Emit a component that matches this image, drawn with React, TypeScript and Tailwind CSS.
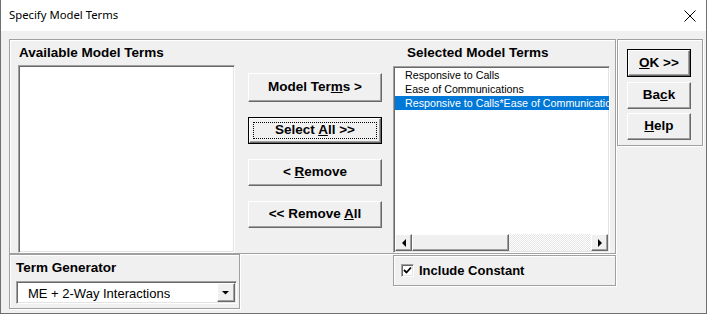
const frame =
  "border border-[#a0a0a0] shadow-[inset_1px_1px_0_#ffffff,1px_1px_0_#ffffff]";
const sunken =
  "border border-t-[#a0a0a0] border-l-[#a0a0a0] border-r-white border-b-white shadow-[inset_1px_1px_0_#696969,inset_-1px_-1px_0_#e3e3e3]";
const raised =
  "border border-t-white border-l-white border-r-[#696969] border-b-[#696969] shadow-[inset_-1px_-1px_0_#a0a0a0] bg-[#f0f0f0]";

function Btn({
  children,
  h,
  mt,
  isDefault,
  focused,
}: {
  children: React.ReactNode;
  h: string;
  mt: string;
  isDefault?: boolean;
  focused?: boolean;
}) {
  if (isDefault) {
    return (
      <div className={`${h} ${mt} border border-black`}>
        <div className={`${raised} flex h-full items-center justify-center`}>
          <span
            className={`flex items-center justify-center ${
              focused
                ? "h-[calc(100%-6px)] w-[calc(100%-6px)] border border-dotted border-black"
                : ""
            }`}
          >
            {children}
          </span>
        </div>
      </div>
    );
  }
  return (
    <div className={`${h} ${mt} ${raised} flex items-center justify-center`}>
      {children}
    </div>
  );
}

function Arrow({ dir }: { dir: "left" | "right" | "down" }) {
  if (dir === "down") {
    return (
      <svg width="10" height="10" viewBox="0 0 10 10">
        <polygon points="1,3 8,3 4.5,6.5" fill="#000" />
      </svg>
    );
  }
  return (
    <svg width="8" height="10" viewBox="0 0 8 10">
      <polygon points={dir === "left" ? "6,1 6,9 2,5" : "2,1 2,9 6,5"} fill="#000" />
    </svg>
  );
}

const selected = [
  "Responsive to Calls",
  "Ease of Communications",
  "Responsive to Calls*Ease of Communications",
];

export default function App() {
  return (
    <div className="h-[315px] w-[707px] overflow-hidden bg-white font-['Liberation_Sans',Arial,sans-serif] text-black">
      <div className="flex h-[314px] w-[707px] flex-col border-x border-b border-[#6f6f6f] bg-[#f0f0f0]">
        {/* title bar */}
        <div className="flex h-[31px] items-center justify-between bg-white pl-[8px] pr-[9px]">
          <span className="font-['Noto_Sans',sans-serif] text-[11.3px]">
            Specify Model Terms
          </span>
          <svg width="12" height="12" viewBox="0 0 12 12" className="mr-[1px]">
            <path d="M0.5 0.5 L11.5 11.5 M11.5 0.5 L0.5 11.5" stroke="#000" strokeWidth="1" />
          </svg>
        </div>

        <div className="flex pl-[8px] pt-[8px]">
          {/* left column */}
          <div className="w-[607px]">
            <div className={`${frame} flex h-[215px] pl-[8px]`}>
              {/* available */}
              <div className="flex w-[217px] flex-col">
                <div className="flex h-[25px] items-center pl-[1px] pt-[1px] text-[13.5px] font-bold">
                  Available Model Terms
                </div>
                <div className={`${sunken} flex-1 bg-white`} />
              </div>

              {/* buttons */}
              <div className="ml-[13px] flex w-[134px] flex-col pt-[33px] text-[13.5px] font-bold">
                <Btn h="h-[29px]" mt="mt-0">
                  <span>
                    Model Ter<u>m</u>s &gt;
                  </span>
                </Btn>
                <Btn h="h-[27px]" mt="mt-[15px]" isDefault focused>
                  <span>
                    Select <u>A</u>ll &gt;&gt;
                  </span>
                </Btn>
                <Btn h="h-[27px]" mt="mt-[15px]">
                  <span>
                    &lt; <u>R</u>emove
                  </span>
                </Btn>
                <Btn h="h-[27px]" mt="mt-[15px]">
                  <span>
                    &lt;&lt; Remove <u>A</u>ll
                  </span>
                </Btn>
              </div>

              {/* selected */}
              <div className="ml-[11px] flex w-[217px] flex-col">
                <div className="flex h-[26px] items-center pl-[14px] pt-[1px] text-[13.5px] font-bold">
                  Selected Model Terms
                </div>
                <div className={`${sunken} flex flex-1 flex-col bg-white`}>
                  <div className="flex-1 overflow-hidden pt-[1px] pl-[1px] text-[10.7px]">
                    {selected.map((t, i) => (
                      <div
                        key={t}
                        className={`flex h-[14px] items-center whitespace-nowrap pl-[10px] ${
                          i === 2 ? "bg-[#0078d7] text-white" : ""
                        }`}
                      >
                        {t}
                      </div>
                    ))}
                  </div>
                  {/* horizontal scrollbar */}
                  <div className="mx-[1px] mb-[1px] flex h-[17px] bg-[image:repeating-conic-gradient(#ffffff_0_25%,#e6e6e6_0_50%)] bg-[length:2px_2px]">
                    <div className={`${raised} flex w-[17px] items-center justify-center`}>
                      <Arrow dir="left" />
                    </div>
                    <div className={`${raised} w-[97px]`} />
                    <div className="flex-1" />
                    <div className={`${raised} flex w-[17px] items-center justify-center`}>
                      <Arrow dir="right" />
                    </div>
                  </div>
                </div>
              </div>
            </div>

            {/* bottom row */}
            <div className="flex">
              <div className={`${frame} flex h-[55px] w-[231px] flex-col pl-[6px]`}>
                <div className="flex h-[26px] items-center text-[13.5px] font-bold">
                  Term Generator
                </div>
                <div className={`${sunken} flex h-[23px] w-[221px] bg-white`}>
                  <div className="flex flex-1 items-center pl-[11px] pt-[2px] text-[13px]">
                    ME + 2-Way Interactions
                  </div>
                  <div className={`${raised} my-[1px] mr-[1px] flex w-[18px] items-center justify-center`}>
                    <Arrow dir="down" />
                  </div>
                </div>
              </div>

              <div className={`${frame} ml-[153px] mt-[1px] flex h-[31px] w-[223px] items-center pl-[7px]`}>
                <div className={`${sunken} flex h-[13px] w-[13px] items-center justify-center bg-white`}>
                  <svg width="9" height="9" viewBox="0 0 9 9">
                    <path d="M1 4 L3.5 6.5 L8 1.5" stroke="#000" strokeWidth="1.8" fill="none" />
                  </svg>
                </div>
                <span className="ml-[5px] text-[13px] font-bold">Include Constant</span>
              </div>
            </div>
          </div>

          {/* right frame */}
          <div className={`${frame} ml-[1px] flex h-[107px] w-[86px] flex-col pl-[9px] pt-[9px] text-[13.5px] font-bold`}>
            <div className="w-[64px]">
              <Btn h="h-[28px]" mt="mt-0" isDefault>
                <span>
                  <u>O</u>K &gt;&gt;
                </span>
              </Btn>
              <Btn h="h-[27px]" mt="mt-[5px]">
                <span>
                  Ba<u>c</u>k
                </span>
              </Btn>
              <Btn h="h-[27px]" mt="mt-[4px]">
                <span>
                  <u>H</u>elp
                </span>
              </Btn>
            </div>
          </div>
        </div>
      </div>
    </div>
  );
}
